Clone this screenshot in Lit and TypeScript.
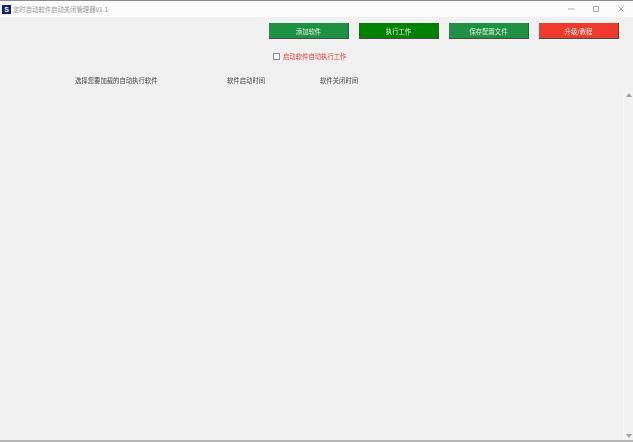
import { LitElement, html, css } from "lit";
import { customElement } from "lit/decorators.js";

@customElement("app-root")
export class AppRoot extends LitElement {
  static styles = css`
    :host { display: block; width: 633px; height: 442px; overflow: hidden; background: #f0f0f0;
      font-family: "Noto Sans CJK SC", "Liberation Sans", sans-serif; font-size: 6.35px; color: #333; }
    .window { height: 442px; box-sizing: border-box; display: flex; flex-direction: column;
      border-top: 1px solid #8c8c8c; border-bottom: 2px solid #b4b4b4; filter: blur(0.4px); }
    .titlebar { height: 16px; flex: none; background: #fbfbfb; display: flex; align-items: center; padding-left: 2px; color: #9a9a9a; }
    .logo { width: 9px; height: 9px; background: #10206e; color: #fff; font: bold 7px/9px "Liberation Sans", sans-serif; text-align: center; margin-right: 2px; }
    .title { flex: 1; }
    .controls { display: flex; align-items: center; gap: 19px; margin-right: 9px; }
    .controls svg { display: block; }
    .content { flex: 1; display: flex; flex-direction: column; min-height: 0; }
    .buttons { display: flex; justify-content: flex-end; gap: 10px; padding: 6px 14px 0 0; }
    .btn { width: 80px; height: 16px; box-sizing: border-box; color: #e8f2e8; display: flex; align-items: center; justify-content: center; padding-top: 1px;
      border-right: 1px solid #4a4a4a; border-bottom: 1px solid #4a4a4a; }
    .add, .save { background: #1e9142; }
    .run { background: #008000; }
    .up { background: #ee3b2e; }
    .auto { display: flex; align-items: center; margin: 13px 0 0 273px; height: 8px; color: #f5333f; }
    .check { width: 5px; height: 5px; border: 1px solid #8a8a8a; background: #fff; margin-right: 3px; }
    .headers { display: grid; grid-template-columns: 152px 93px auto; justify-content: start; margin: 16px 0 0 75px; height: 10px; line-height: 10px; color: #444; }
    .lower { flex: 1; display: flex; justify-content: flex-end; min-height: 0; padding-top: 4px; }
    .bar { width: 9px; display: flex; flex-direction: column; justify-content: space-between; align-items: center; padding: 3px 0 2px; background: #f2f2f2; border-left: 1px solid #f6f6f6; }
  `;
  render() {
    return html`<div class="window">
      <div class="titlebar">
        <div class="logo">S</div>
        <div class="title">定时自动软件启动关闭管理器V1.1</div>
        <div class="controls">
          <svg width="6" height="6" viewBox="0 0 6 6"><path d="M0 3H6" stroke="#999" stroke-width="0.8"/></svg>
          <svg width="6" height="6" viewBox="0 0 6 6"><rect x="0.5" y="0.5" width="5" height="5" fill="none" stroke="#999" stroke-width="0.8"/></svg>
          <svg width="6" height="6" viewBox="0 0 6 6"><path d="M0.5 0.5L5.5 5.5M5.5 0.5L0.5 5.5" stroke="#999" stroke-width="0.8"/></svg>
        </div>
      </div>
      <div class="content">
        <div class="buttons">
          <div class="btn add">添加软件</div>
          <div class="btn run">执行工作</div>
          <div class="btn save">保存配置文件</div>
          <div class="btn up">升级/教程</div>
        </div>
        <div class="auto"><span class="check"></span>启动软件自动执行工作</div>
        <div class="headers"><span>选择您要加载的自动执行软件</span><span>软件启动时间</span><span>软件关闭时间</span></div>
        <div class="lower">
          <div class="bar">
            <svg width="6" height="4" viewBox="0 0 6 4"><path d="M3 0L6 4H0Z" fill="#a0a0a0"/></svg>
            <svg width="6" height="4" viewBox="0 0 6 4"><path d="M0 0H6L3 4Z" fill="#a0a0a0"/></svg>
          </div>
        </div>
      </div>
    </div>`;
  }
}
